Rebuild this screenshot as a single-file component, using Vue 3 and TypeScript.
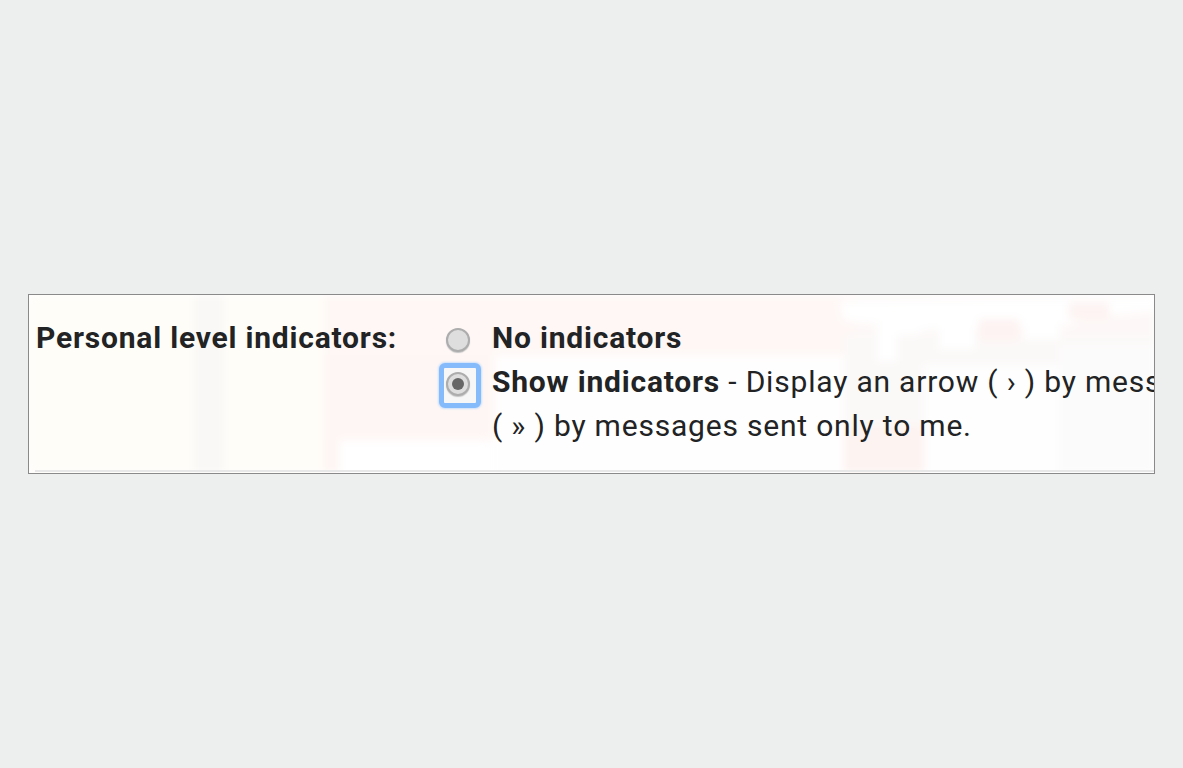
<script setup lang="ts">
const blocks: { x: number; y: number; w: number; h: number; c: string }[] = [
  { x: -10, y: -10, w: 175, h: 200, c: '#fffdf8' },
  { x: 165, y: -10, w: 30, h: 200, c: '#f9f8f6' },
  { x: 195, y: -10, w: 100, h: 200, c: '#fffdf8' },
  { x: 295, y: -10, w: 530, h: 70, c: '#fef7f5' },
  { x: 295, y: 60, w: 170, h: 85, c: '#fef6f4' },
  { x: 295, y: 145, w: 15, h: 45, c: '#fef5f3' },
  { x: 310, y: 145, w: 150, h: 45, c: '#ffffff' },
  { x: 465, y: 60, w: 350, h: 130, c: '#fffefe' },
  { x: 825, y: -10, w: 311, h: 200, c: '#fdf8f7' },
  { x: 815, y: 40, w: 321, h: 150, c: '#fbf9f8' },
  { x: 815, y: 130, w: 80, h: 60, c: '#fdf3f1' },
  { x: 895, y: 70, w: 241, h: 120, c: '#fefefe' },
  { x: 1030, y: 50, w: 106, h: 140, c: '#fcfbfb' },
]
</script>

<template>
  <div class="page">
    <section class="card">
      <svg class="backdrop" width="1126" height="178" viewBox="0 0 1126 178" aria-hidden="true">
        <rect v-for="(b, i) in blocks" :key="i" :x="b.x" :y="b.y" :width="b.w" :height="b.h" :fill="b.c" />
        <path d="M810 6 L1126 2 V16 L1060 22 L1040 30 L1010 26 L990 32 L960 30 L930 36 L900 34 L885 40 L865 40 L860 30 L815 26 Z" fill="#ffffff" />
        <path d="M848 30h20v36h-20zM910 26h36v28h-36zM995 18h36v26h-36z" fill="#ffffff" />
        <path d="M950 24h40v22h-40zM1040 8h40v16h-40z" fill="#fdf3f2" />
      </svg>
      <div class="rule"></div>
      <div class="row">
        <div class="label">Personal level indicators:</div>
        <div class="options">
          <label class="option">
            <span class="control"><span class="radio"></span></span>
            <span class="text"><b>No indicators</b></span>
          </label>
          <label class="option">
            <span class="control focused"><span class="radio"><span class="dot"></span></span></span>
            <span class="text"><b>Show indicators</b> - Display an arrow ( › ) by mess<br />( » ) by messages sent only to me.</span>
          </label>
        </div>
      </div>
    </section>
  </div>
</template>

<style scoped>
.page {
  min-height: 768px;
  box-sizing: border-box;
  padding: 294px 28px 0;
  background: #edeeee;
  font-family: Roboto, "Liberation Sans", sans-serif;
  color: #222324;
}
.card {
  position: relative;
  box-sizing: border-box;
  width: 1127px;
  height: 180px;
  border: 1px solid #8a8a8a;
  background: #fff;
  overflow: hidden;
}
.backdrop {
  position: absolute;
  inset: 0;
  filter: blur(4px);
}
.rule {
  position: absolute;
  left: 6px;
  right: 0;
  bottom: 1px;
  height: 2px;
  background: #e8e8e8;
}
.row {
  position: relative;
  display: flex;
  padding: 21px 0 0 7px;
  font-size: 30px;
  line-height: 44px;
  letter-spacing: 0.8px;
  white-space: nowrap;
}
.label {
  width: 403px;
  flex: none;
  font-weight: 700;
}
.options {
  display: flex;
  flex-direction: column;
}
.option {
  display: flex;
}
.control {
  flex: none;
  box-sizing: border-box;
  width: 42px;
  height: 45px;
  margin: 3px 11px -4px 0;
  display: flex;
  align-items: center;
  justify-content: center;
  border: 5px solid transparent;
  border-radius: 6px;
}
.control.focused {
  border-color: #86bbfb;
  box-shadow: 0 0 2px 1px #c9e0fb;
  background: #f7f7f7;
}
.radio {
  box-sizing: border-box;
  width: 24px;
  height: 24px;
  margin: 0 4px 3px 0;
  border-radius: 50%;
  border: 2px solid #adadad;
  background: #dedede;
  box-shadow: 0 1px 1px #c4c4c4;
  display: flex;
  align-items: center;
  justify-content: center;
}
.dot {
  width: 12px;
  height: 12px;
  border-radius: 50%;
  background: #666;
}
.text {
  font-weight: 400;
}
.text b {
  font-weight: 700;
}
</style>
